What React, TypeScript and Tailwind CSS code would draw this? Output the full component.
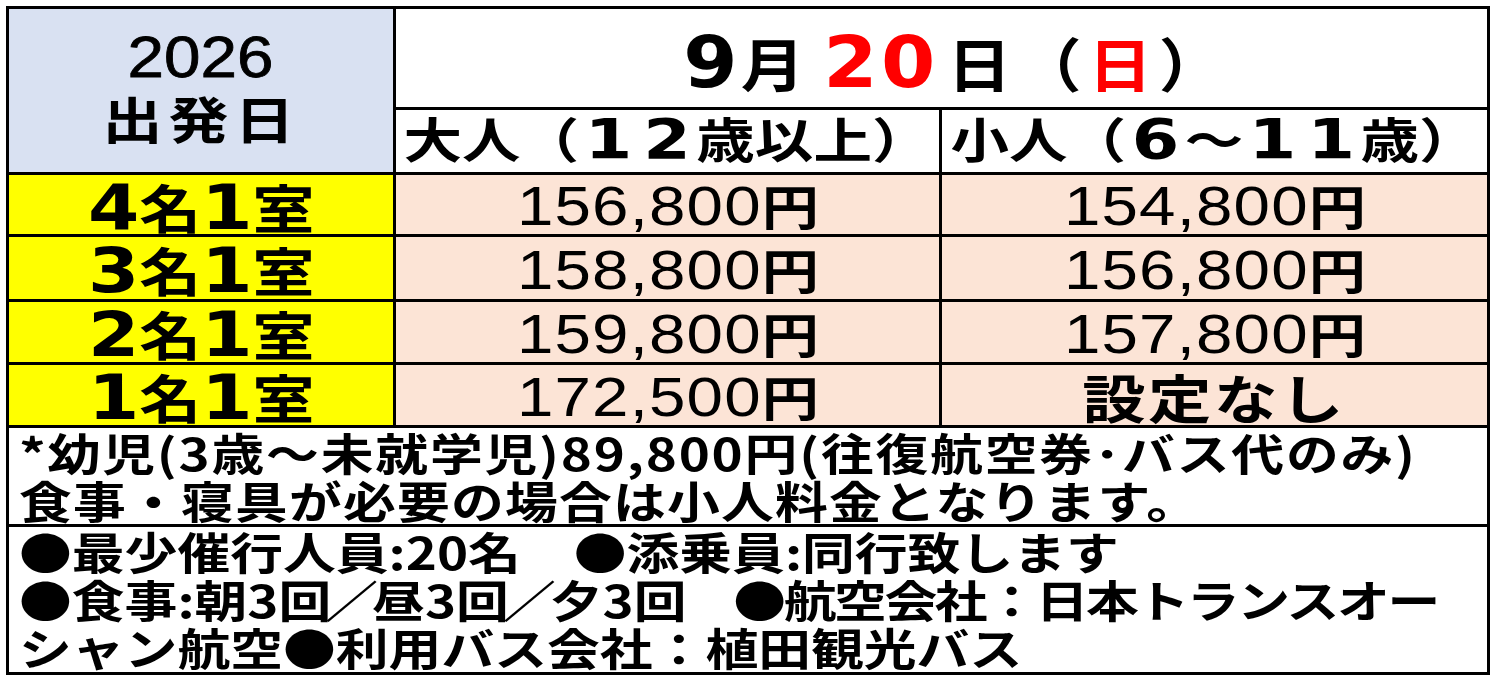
import React from 'react';

const jp = "font-['Noto_Sans_CJK_JP',sans-serif]";
const latin = "font-['Liberation_Sans','Noto_Sans_CJK_JP',sans-serif]";
const wideDigit = "font-['DejaVu_Sans','Noto_Sans_CJK_JP',sans-serif]";

const rows = [
  { n: '4', adult: '156,800', child: '154,800' },
  { n: '3', adult: '158,800', child: '156,800' },
  { n: '2', adult: '159,800', child: '157,800' },
  { n: '1', adult: '172,500', child: null },
];

// 全角幅の枠に太い半角数字を置く
const WideNum = ({ d }: { d: string }) => (
  <>
    {d.split('').map((c, i) => (
      <span key={i} className={`${wideDigit} inline-block w-[48px] text-center text-[56px]`}>
        {c}
      </span>
    ))}
  </>
);

const RoomLabel = ({ n }: { n: string }) => (
  <span className="inline-block scale-x-[1.19] whitespace-nowrap font-bold leading-none">
    <span className={`${wideDigit} text-[62px]`}>{n}</span>
    <span className={`${jp} text-[52px]`}>名</span>
    <span className={`${wideDigit} text-[62px]`}>1</span>
    <span className={`${jp} text-[52px]`}>室</span>
  </span>
);

const Price = ({ value }: { value: string | null }) => {
  if (!value) {
    return (
      <span className={`${jp} inline-block scale-x-[1.22] text-[52px] font-bold leading-none tracking-[2px]`}>
        設定なし
      </span>
    );
  }
  return (
    <span className="inline-block scale-x-[1.19] whitespace-nowrap leading-none">
      <span className={`${latin} text-[55px] tracking-[1px]`}>{value}</span>
      <span className={`${jp} text-[48px] font-bold`}>円</span>
    </span>
  );
};

const Line = ({ className = '', children }: { className?: string; children: React.ReactNode }) => (
  <div className={`w-fit origin-left scale-x-[1.2] ${className}`}>{children}</div>
);

export default function App() {
  return (
    <div className="min-h-[679px] bg-white pl-[6px] pt-[6px]">
      <div className="grid w-[1484px] grid-cols-[384px_543px_545px] grid-rows-[98px_62px_59px_62px_60px_60px_96px_145px] gap-[3px] bg-black p-[3px] text-black">
        {/* 出発日 */}
        <div className="row-span-2 flex flex-col items-center bg-[#d9e1f2] pt-[19px]">
          <span className={`${latin} inline-block scale-x-[1.13] text-[58px] leading-none [-webkit-text-stroke:0.8px_black]`}>
            2026
          </span>
          <span className={`${jp} mt-[6px] inline-block scale-x-[1.2] text-[50px] font-bold leading-none tracking-[5px]`}>
            出発日
          </span>
        </div>

        {/* 日付 */}
        <div className="col-span-2 flex items-center justify-center bg-white pl-[30px] pt-[8px]">
          <span className="inline-block scale-x-[1.1] whitespace-nowrap font-bold leading-none tracking-[3px]">
            <span className={`${wideDigit} text-[71px]`}>9</span>
            <span className={`${jp} text-[58px]`}>月</span>
            <span className={`${wideDigit} ml-[14px] mr-[8px] text-[71px] text-[#ff0000]`}>20</span>
            <span className={`${jp} text-[58px] tracking-[6px]`}>
              日（<span className="text-[#ff0000]">日</span>）
            </span>
          </span>
        </div>

        <div className="flex items-center justify-center bg-white pb-[4px]">
          <span className={`${jp} inline-block scale-x-[1.22] whitespace-nowrap text-[48px] font-bold leading-none`}>
            大人（<WideNum d="12" />歳以上）
          </span>
        </div>
        <div className="flex items-center justify-center bg-white pb-[4px]">
          <span className={`${jp} inline-block scale-x-[1.22] whitespace-nowrap text-[48px] font-bold leading-none`}>
            小人（<WideNum d="6" />～<WideNum d="11" />歳）
          </span>
        </div>

        {rows.map((r) => (
          <React.Fragment key={r.n}>
            <div className="flex items-center justify-center bg-[#ffff00] pt-[6px]">
              <RoomLabel n={r.n} />
            </div>
            <div className="flex items-center justify-center bg-[#fce4d6] pt-[4px]">
              <Price value={r.adult} />
            </div>
            <div className="flex items-center justify-center bg-[#fce4d6] pt-[4px]">
              <Price value={r.child} />
            </div>
          </React.Fragment>
        ))}

        {/* 幼児料金 */}
        <div className={`${jp} col-span-3 whitespace-nowrap bg-white pl-[10px] text-[44px] font-bold leading-[48px]`}>
          <Line className="tracking-[1.5px]">*幼児(3歳～未就学児)89,800円(往復航空券･バス代のみ)</Line>
          <Line className="tracking-[1px]">食事・寝具が必要の場合は小人料金となります。</Line>
        </div>

        {/* 備考 */}
        <div className={`${jp} col-span-3 whitespace-nowrap bg-white pl-[10px] text-[44px] font-bold leading-[48px]`}>
          <Line>●最少催行人員:20名{'　'}●添乗員:同行致します</Line>
          <Line>
            ●食事:朝3回<span className="-mx-[5px]">／</span>昼3回<span className="-mx-[5px]">／</span>夕3回{'　'}
            <span className="-ml-[5px] tracking-[-2px]">●航空会社：日本トランスオー</span>
          </Line>
          <Line>シャン航空●利用バス会社：植田観光バス</Line>
        </div>
      </div>
    </div>
  );
}
